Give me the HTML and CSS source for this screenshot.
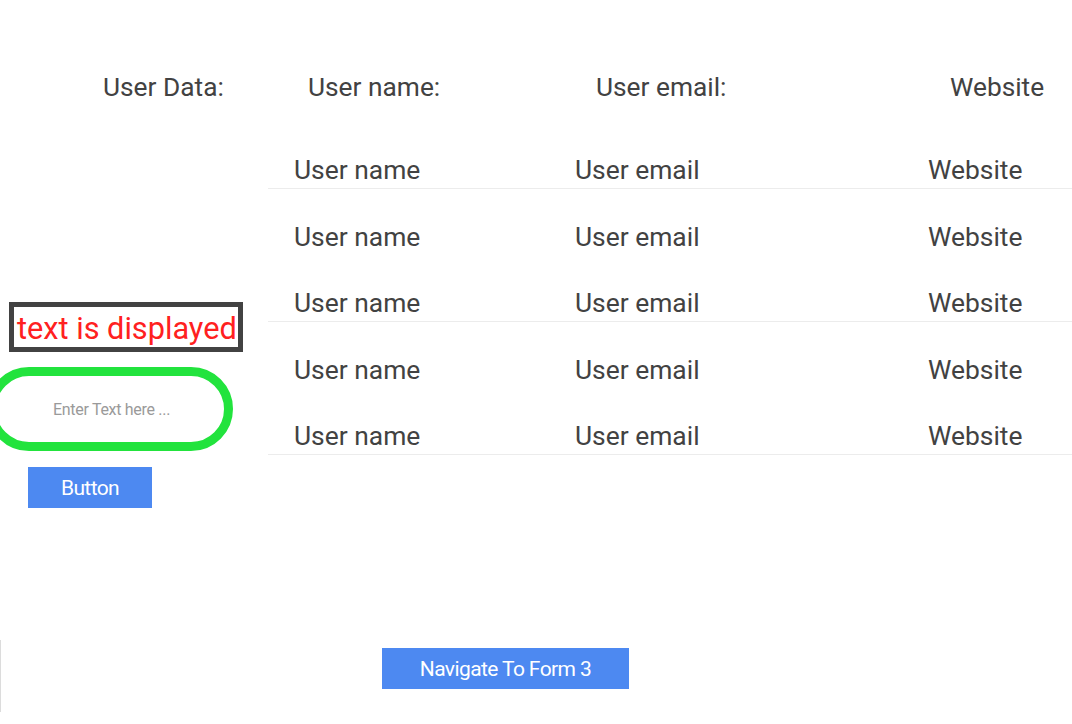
FILE: index.html
```html
<!DOCTYPE html>
<html>
<head>
<meta charset="utf-8">
<link rel="stylesheet" href="styles.css">
</head>
<body>
<div class="page">
  <div class="header">
    <div class="h-title">User Data:</div>
    <div class="h-name">User name:</div>
    <div class="h-email">User email:</div>
    <div class="h-web">Website</div>
  </div>
  <div class="main">
    <div class="side">
      <div class="display">text is displayed</div>
      <input class="pill" type="text" placeholder="Enter Text here ...">
      <button class="btn btn-small">Button</button>
    </div>
    <div class="table">
      <div class="row line"><span class="c-name">User name</span><span class="c-email">User email</span><span class="c-web">Website</span></div>
      <div class="row"><span class="c-name">User name</span><span class="c-email">User email</span><span class="c-web">Website</span></div>
      <div class="row line"><span class="c-name">User name</span><span class="c-email">User email</span><span class="c-web">Website</span></div>
      <div class="row"><span class="c-name">User name</span><span class="c-email">User email</span><span class="c-web">Website</span></div>
      <div class="row line"><span class="c-name">User name</span><span class="c-email">User email</span><span class="c-web">Website</span></div>
    </div>
  </div>
  <div class="footer">
    <button class="btn btn-nav">Navigate To Form 3</button>
  </div>
</div>
</body>
</html>
```
FILE: styles.css
```css
html, body {
  margin: 0;
  padding: 0;
  background: #ffffff;
}
body {
  font-family: Roboto, "Liberation Sans", sans-serif;
  color: #424242;
  overflow: hidden;
}
.page {
  width: 1072px;
  height: 724px;
}
.header {
  display: grid;
  grid-template-columns: 308px 288px 354px 1fr;
  height: 122px;
  padding-top: 69px;
  box-sizing: border-box;
  font-size: 26.3px;
  line-height: 36px;
}
.h-title {
  padding-left: 103px;
}
.main {
  display: flex;
  height: 518px;
}
.side {
  width: 268px;
  flex: none;
  display: flex;
  flex-direction: column;
  align-items: flex-start;
  padding-top: 180px;
  box-sizing: border-box;
}
.display {
  margin-left: 9px;
  width: 234px;
  height: 50px;
  box-sizing: border-box;
  border: 5px solid #424242;
  color: #ff2020;
  font-size: 30.7px;
  line-height: 40px;
  padding: 2px 0 0 3px;
  white-space: nowrap;
  overflow: hidden;
}
.pill {
  margin-top: 15px;
  margin-left: -13px;
  width: 246px;
  height: 84px;
  box-sizing: border-box;
  border: 9px solid #22e33d;
  border-radius: 42px;
  padding: 0 0 0 57px;
  font-family: Roboto, "Liberation Sans", sans-serif;
  font-size: 16px;
  letter-spacing: -0.3px;
  color: #333;
  outline: none;
  background: #fff;
}
.pill::placeholder {
  color: #9a9a9a;
}
.btn {
  background: #4d89f1;
  color: #ffffff;
  border: none;
  font-family: Roboto, "Liberation Sans", sans-serif;
  font-size: 21px;
  letter-spacing: -0.6px;
  padding: 0;
  height: 41px;
}
.btn-small {
  margin-top: 16px;
  margin-left: 28px;
  width: 124px;
}
.table {
  flex: 1;
}
.row {
  display: grid;
  grid-template-columns: 307px 353px 1fr;
  height: 66.5px;
  box-sizing: border-box;
  padding-top: 30px;
  font-size: 26.4px;
  line-height: 36px;
  border-bottom: 1px solid transparent;
}
.row.line {
  border-bottom-color: #ececec;
}
.c-name {
  padding-left: 26px;
}
.footer {
  height: 72px;
  border-left: 1px solid #dcdcdc;
  padding-top: 8px;
  padding-left: 381px;
  box-sizing: border-box;
}
.btn-nav {
  width: 247px;
}
```
